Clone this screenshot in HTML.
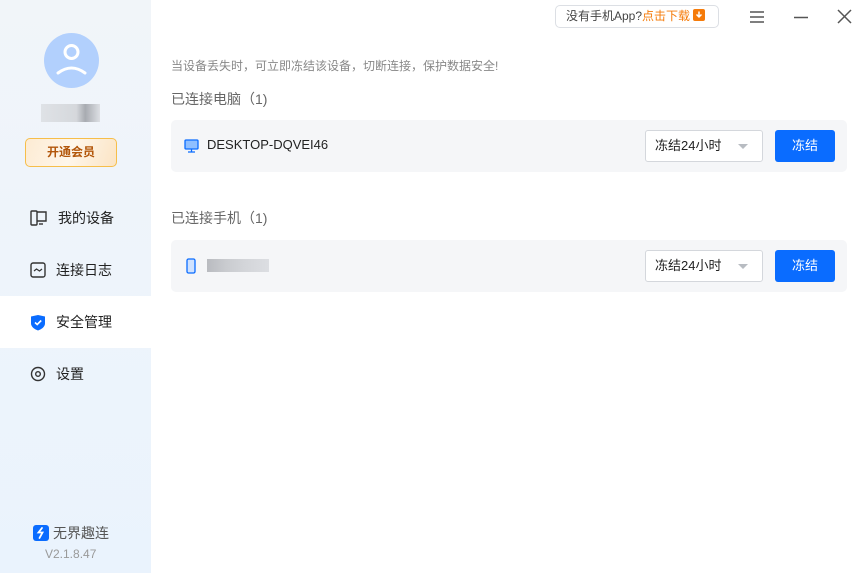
<!DOCTYPE html>
<html><head><meta charset="utf-8"><style>
*{margin:0;padding:0;box-sizing:border-box}
body{width:862px;height:573px;overflow:hidden;background:#fff;font-family:"Liberation Sans","Noto Sans CJK SC",sans-serif;position:relative;color:#222}
.side{position:absolute;left:0;top:0;width:151px;height:573px;background:linear-gradient(#f1f5f9,#eaf3fd)}
.abs{position:absolute}
.nav{position:absolute;left:0;width:151px;height:52px;display:flex;align-items:center;padding-left:30px;font-size:14px;color:#222}
.nav svg{margin-right:10px}
.card{position:absolute;left:171px;width:676px;height:52px;background:#f5f6f8;border-radius:5px}
.sel{position:absolute;left:474px;top:10px;width:118px;height:32px;border:1px solid #d4d7dc;border-radius:3px;background:#fff;font-size:13px;line-height:30px;padding-left:9px;color:#222}
.sel:after{content:"";position:absolute;right:14px;top:13px;border:5px solid transparent;border-top:5px solid #b8bcc2}
.btn{position:absolute;left:604px;top:10px;width:60px;height:32px;background:#0a6cff;border-radius:3px;color:#fff;font-size:13px;line-height:32px;text-align:center}
</style></head><body>
<div class="side">
  <div class="abs" style="left:44px;top:33px;width:55px;height:55px;border-radius:50%;background:#b2d0fd">
    <svg width="55" height="55" viewBox="0 0 55 55"><circle cx="27.5" cy="19" r="6.5" fill="none" stroke="#fff" stroke-width="3"/><path d="M14 40 Q27.5 30 41 40" fill="none" stroke="#fff" stroke-width="3" stroke-linecap="round"/></svg>
  </div>
  <div class="abs" style="left:41px;top:104px;width:59px;height:18px;background:linear-gradient(90deg,#dfe2e6 0,#d5d8dc 60%,#a8abb1 75%,#dde0e4 100%)"></div>
  <div class="abs" style="left:25px;top:138px;width:92px;height:29px;border:1px solid #f6be4a;border-radius:5px;background:linear-gradient(110deg,#fdebd3,#fef6ea 50%,#fbe4c4);color:#b2560a;font-size:12px;font-weight:bold;text-align:center;line-height:27px">开通会员</div>
  <div class="nav" style="top:192px"><svg width="18" height="16" viewBox="0 0 18 16"><rect x="1" y="1" width="6" height="14" rx="1" fill="none" stroke="#333" stroke-width="1.4"/><path d="M7 2h9v9H7" fill="none" stroke="#333" stroke-width="1.4"/><path d="M9 14h4" stroke="#333" stroke-width="1.4"/></svg>我的设备</div>
  <div class="nav" style="top:244px"><svg width="16" height="16" viewBox="0 0 16 16"><rect x="1" y="1" width="14" height="14" rx="2" fill="none" stroke="#333" stroke-width="1.4"/><path d="M4 9l2.5-2 3 2 2.5-2" fill="none" stroke="#333" stroke-width="1.2"/></svg>连接日志</div>
  <div class="nav" style="top:296px;background:#fff"><svg width="16" height="17" viewBox="0 0 16 17"><path d="M1 2.5L8 1l7 1.5v7C15 13 11 15.5 8 16.5 5 15.5 1 13 1 9.5z" fill="#0a6cff"/><path d="M5 8.5l2.2 2 4-4" fill="none" stroke="#fff" stroke-width="1.6"/></svg>安全管理</div>
  <div class="nav" style="top:348px"><svg width="16" height="16" viewBox="0 0 16 16"><circle cx="8" cy="8" r="6.5" fill="none" stroke="#333" stroke-width="1.4"/><circle cx="8" cy="8" r="2.3" fill="none" stroke="#333" stroke-width="1.4"/></svg>设置</div>
  <div class="abs" style="left:33px;top:523px;font-size:14px;color:#555;display:flex;align-items:center"><span style="display:inline-block;width:16px;height:16px;background:#0a6cff;border-radius:3px;margin-right:4px;position:relative"><svg width="16" height="16" viewBox="0 0 16 16"><path d="M9 3L5.5 7.5h4L6.5 13" fill="none" stroke="#fff" stroke-width="1.8" stroke-linecap="round"/></svg></span>无界趣连</div>
  <div class="abs" style="left:45px;top:547px;font-size:12px;color:#999">V2.1.8.47</div>
</div>
<div class="abs" style="left:555px;top:5px;width:164px;height:23px;border:1px solid #dcdfe4;border-radius:5px;font-size:12px;line-height:21px;padding-left:10px;color:#444">没有手机App?<span style="color:#f57b0a">点击下载</span><span style="display:inline-block;width:12px;height:12px;background:#f57b0a;border-radius:2px;vertical-align:-1px;margin-left:3px;position:relative"><svg width="12" height="12" viewBox="0 0 12 12" style="display:block"><path d="M6 2.5v5M3.5 5.5L6 8l2.5-2.5" fill="none" stroke="#fff" stroke-width="1.5"/></svg></span></div>
<svg class="abs" style="left:749px;top:10px" width="16" height="14"><path d="M1 2h14M1 7h14M1 12h14" stroke="#555" stroke-width="1.5"/></svg>
<svg class="abs" style="left:793px;top:10px" width="16" height="14"><path d="M1 7.5h14" stroke="#555" stroke-width="1.5"/></svg>
<svg class="abs" style="left:837px;top:9px" width="15" height="15"><path d="M1 1l13 13M14 1L1 14" stroke="#555" stroke-width="1.5"/></svg>
<div class="abs" style="left:171px;top:57px;font-size:12px;color:#888">当设备丢失时，可立即冻结该设备，切断连接，保护数据安全!</div>
<div class="abs" style="left:171px;top:89px;font-size:14px;color:#666">已连接电脑（1)</div>
<div class="card" style="top:120px">
  <svg class="abs" style="left:13px;top:19px" width="15" height="14" viewBox="0 0 15 14"><rect x="1" y="1" width="13" height="9" rx="1" fill="#8fbfff" stroke="#0a6cff" stroke-width="1.3"/><path d="M4 13h7M7.5 10v3" stroke="#0a6cff" stroke-width="1.3"/></svg>
  <div class="abs" style="left:36px;top:17px;font-size:13px;color:#222">DESKTOP-DQVEI46</div>
  <div class="sel">冻结24小时</div><div class="btn">冻结</div>
</div>
<div class="abs" style="left:171px;top:208px;font-size:14px;color:#666">已连接手机（1)</div>
<div class="card" style="top:240px">
  <svg class="abs" style="left:15px;top:18px" width="10" height="16" viewBox="0 0 10 16"><rect x="1" y="1" width="8" height="14" rx="1.5" fill="#cfe2ff" stroke="#0a6cff" stroke-width="1.3"/></svg>
  <div class="abs" style="left:36px;top:19px;width:62px;height:13px;background:linear-gradient(90deg,#b9bbc0 0,#c9cbcf 30%,#d3d5d9 60%,#dcdee2 100%)"></div>
  <div class="sel">冻结24小时</div><div class="btn">冻结</div>
</div>
</body></html>
